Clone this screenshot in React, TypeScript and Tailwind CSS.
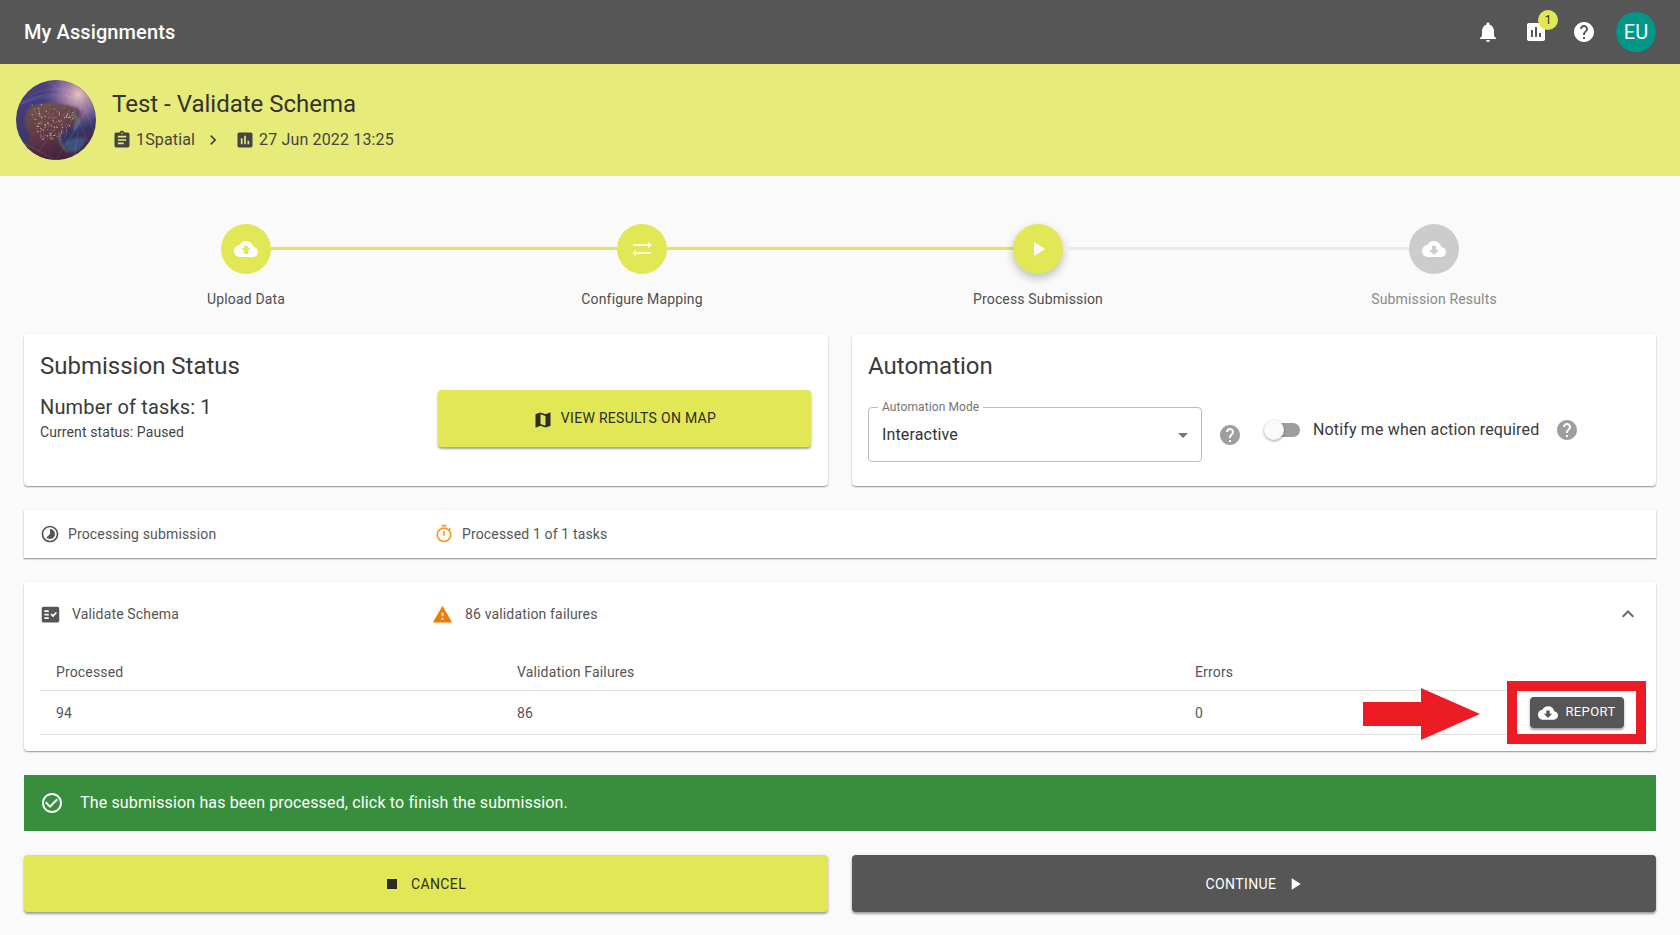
import type { ReactNode } from "react"
import {
  MdAssessment,
  MdAssignment,
  MdArrowDropDown,
  MdCheckCircleOutline,
  MdChevronRight,
  MdCloudDownload,
  MdCloudUpload,
  MdExpandLess,
  MdFactCheck,
  MdHelp,
  MdMap,
  MdNotifications,
  MdOutlineTimer,
  MdPlayArrow,
  MdStop,
  MdTimelapse,
  MdWarning,
} from "react-icons/md"

const cardShadow = "shadow-[0_1px_2px_rgba(0,0,0,0.25),0_1px_1px_rgba(0,0,0,0.2)]"
const buttonShadow = "shadow-[0_2px_2px_rgba(0,0,0,0.3),0_1px_4px_rgba(0,0,0,0.12)]"

const hash = (n: number) => {
  const s = Math.sin(n * 12.9898) * 43758.5453
  return s - Math.floor(s)
}

// scattered city lights for the globe avatar
const lights = Array.from({ length: 220 }, (_, i) => {
  const t = hash(i + 1)
  const y = 24 + hash(i + 200) * 36
  const left = 13 + (y - 24) * 0.3
  const right = 64 - (y - 24) * 0.45
  return {
    x: left + t * (right - left),
    y,
    r: hash(i + 500) > 0.8 ? 0.7 : 0.4,
    c: i % 3 === 0 ? "#f6e39a" : i % 3 === 1 ? "#eeb9a0" : "#dcc680",
  }
})

const streaks = [
  "M56 -2L82 60",
  "M68 2L58 80",
  "M30 0L82 38",
  "M80 16L40 80",
  "M44 0L76 70",
  "M2 60L40 80",
  "M70 8L22 72",
  "M14 16C30 6 54 6 76 20",
  "M6 24C26 10 56 10 80 30",
]

function Globe() {
  return (
    <svg viewBox="0 0 80 80" className="h-20 w-20 shrink-0">
      <defs>
        <linearGradient id="sea" x1="0.1" y1="0.1" x2="0.6" y2="1">
          <stop offset="0%" stopColor="#4b3f85" />
          <stop offset="40%" stopColor="#3f3a70" />
          <stop offset="75%" stopColor="#33386a" />
          <stop offset="100%" stopColor="#4a2348" />
        </linearGradient>
        <radialGradient id="glow" cx="78%" cy="18%" r="45%">
          <stop offset="0%" stopColor="#f3c9c0" stopOpacity="0.95" />
          <stop offset="55%" stopColor="#b98cb8" stopOpacity="0.55" />
          <stop offset="100%" stopColor="#7a5fa0" stopOpacity="0" />
        </radialGradient>
        <linearGradient id="land" x1="0.2" y1="0" x2="0.5" y2="1">
          <stop offset="0%" stopColor="#735550" />
          <stop offset="50%" stopColor="#613a49" />
          <stop offset="100%" stopColor="#431f3c" />
        </linearGradient>
        <clipPath id="round">
          <circle cx="40" cy="40" r="40" />
        </clipPath>
        <filter id="soft">
          <feGaussianBlur stdDeviation="0.8" />
        </filter>
      </defs>
      <circle cx="40" cy="40" r="40" fill="url(#sea)" />
      <g clipPath="url(#round)">
        <path d="M-4 28C16 16 40 14 62 19" fill="none" stroke="#5f6cae" strokeWidth="1.6" opacity="0.6" filter="url(#soft)" />
        <circle cx="40" cy="40" r="40" fill="url(#glow)" />
        <g filter="url(#soft)">
          <path
            d="M12 30C20 23 34 21 46 24C50 26 58 24 64 31C67 35 62 40 59 45C55 50 51 47 47 52C43 58 46 66 54 72C50 78 44 82 38 82L8 82C6 70 14 62 14 54C8 48 8 38 12 30Z"
            fill="url(#land)"
          />
          <path d="M49 62C54 58 64 57 70 58C68 68 60 74 55 72C51 70 48 66 49 62Z" fill="#3b5c88" opacity="0.8" />
          <path d="M56 33C62 38 62 44 58 50" fill="none" stroke="#63b0b4" strokeWidth="1.6" opacity="0.6" />
          <path d="M45 52C41 58 45 66 52 72" fill="none" stroke="#5aa6a8" strokeWidth="1.2" opacity="0.6" />
        </g>
        {lights.map((l, i) => (
          <circle key={i} cx={l.x} cy={l.y} r={l.r} fill={l.c} opacity="0.75" />
        ))}
        {streaks.map((d, i) => (
          <path key={i} d={d} stroke="#e6d3e2" strokeWidth="0.25" opacity="0.5" fill="none" />
        ))}
      </g>
    </svg>
  )
}

function SwapIcon() {
  return (
    <svg viewBox="0 0 24 24" className="h-6 w-6" fill="currentColor">
      <path d="M3 7.2h15V5l3.5 3-3.5 3V8.8H3z" />
      <path d="M21 15.2H6V13l-3.5 3L6 19v-2.2h15z" />
    </svg>
  )
}

function StepCircle({ children, active, muted }: { children: ReactNode; active?: boolean; muted?: boolean }) {
  return (
    <div
      className={`flex h-[50px] w-[50px] shrink-0 items-center justify-center rounded-full text-white ${
        muted ? "bg-[#cccccc]" : "bg-[#e2e756]"
      } ${active ? "shadow-[0_4px_10px_rgba(0,0,0,0.25)]" : ""}`}
    >
      {children}
    </div>
  )
}

function HeaderIcon({ children }: { children: ReactNode }) {
  return <div className="relative flex h-12 w-12 items-center justify-center text-white">{children}</div>
}

export default function App() {
  return (
    <div className="min-h-screen bg-[#fafafa] pb-[23px] [font-family:Roboto,sans-serif] text-[#333333]">
      <header className="flex h-16 items-center justify-between bg-[#565656] pl-6 pr-6 text-white">
        <h1 className="text-xl font-medium tracking-[0.1px]">My Assignments</h1>
        <div className="flex items-center">
          <HeaderIcon>
            <MdNotifications size={24} />
          </HeaderIcon>
          <HeaderIcon>
            <MdAssessment size={24} />
            <span className="absolute left-[26px] top-[2px] flex h-5 w-5 items-center justify-center rounded-full bg-[#e2e756] text-xs text-[#333333]">
              1
            </span>
          </HeaderIcon>
          <HeaderIcon>
            <MdHelp size={24} />
          </HeaderIcon>
          <div className="ml-2 flex h-10 w-10 items-center justify-center rounded-full bg-[#009688] text-xl">EU</div>
        </div>
      </header>

      <section className="flex h-28 items-center bg-[#e7eb7a] pl-4">
        <Globe />
        <div className="ml-4">
          <h2 className="-mt-[1px] text-2xl leading-8 text-[#333333]">Test - Validate Schema</h2>
          <div className="mt-[8px] flex items-center text-base leading-6 tracking-[0.15px] text-[#444444]">
            <MdAssignment size={20} />
            <span className="ml-[4px]">1Spatial</span>
            <MdChevronRight size={20} className="ml-[8px]" />
            <MdAssessment size={20} className="ml-[12px]" />
            <span className="ml-[4px]">27 Jun 2022 13:25</span>
          </div>
        </div>
      </section>

      <main className="px-6 pt-12">
        <div className="flex items-center px-[197px]">
          <StepCircle>
            <MdCloudUpload size={24} />
          </StepCircle>
          <div className="mb-[2px] h-[3px] flex-1 bg-[#e2e756]" />
          <StepCircle>
            <SwapIcon />
          </StepCircle>
          <div className="mb-[2px] h-[3px] flex-1 bg-[#e2e756]" />
          <StepCircle active>
            <MdPlayArrow size={24} />
          </StepCircle>
          <div className="mb-[2px] h-[3px] flex-1 bg-[#eaeaf0]" />
          <StepCircle muted>
            <MdCloudDownload size={24} />
          </StepCircle>
        </div>
        <div className="mt-[15px] grid grid-cols-4 px-6 text-center text-sm leading-5 tracking-[0.15px] text-[#4f4f4f]">
          <span>Upload Data</span>
          <span>Configure Mapping</span>
          <span>Process Submission</span>
          <span className="text-[#8a8a8a]">Submission Results</span>
        </div>

        <div className="mt-[25px] grid grid-cols-2 gap-6">
          <div className={`flex h-[152px] rounded bg-white ${cardShadow}`}>
            <div className="flex-1 pl-4 pt-[16px]">
              <h3 className="text-2xl leading-8 text-[#3a3a3a]">Submission Status</h3>
              <p className="mt-[11px] text-xl leading-7 tracking-[0.15px] text-[#3a3a3a]">Number of tasks: 1</p>
              <p className="mt-[1px] text-sm leading-5 tracking-[0.1px] text-[#444444]">Current status: Paused</p>
            </div>
            <button
              className={`mr-[17px] mt-[56px] flex h-[57px] w-[373px] items-center justify-center rounded bg-[#e2e756] text-sm tracking-[0.3px] text-[#2e2e20] ${buttonShadow}`}
            >
              <MdMap size={20} className="mr-[8px] mt-[2px]" />
              <span className="-mt-[1px]">VIEW RESULTS ON MAP</span>
            </button>
          </div>

          <div className={`h-[152px] rounded bg-white px-4 pt-[16px] ${cardShadow}`}>
            <h3 className="text-2xl leading-8 text-[#3a3a3a]">Automation</h3>
            <div className="mt-[25px] flex items-center">
              <div className="relative flex h-[55px] w-[334px] items-center justify-between rounded border border-[#bdbdbd] pl-[13px] pr-[6px]">
                <span className="absolute left-[9px] top-[-9px] bg-white px-1 text-xs leading-4 tracking-[0.1px] text-[#757575]">
                  Automation Mode
                </span>
                <span className="text-base tracking-[0.15px] text-[#333333]">Interactive</span>
                <MdArrowDropDown size={24} className="text-[#757575]" />
              </div>
              <MdHelp size={24} className="ml-[16px] text-[#9e9e9e]" />
              <div className="mb-[9px] ml-[22px] flex items-center">
                <div className="relative ml-[2px] h-[14px] w-[34px] rounded-full bg-[#9e9e9e]">
                  <span className="absolute left-[-2px] top-[-3px] h-5 w-5 rounded-full bg-[#fafafa] shadow-[0_1px_3px_rgba(0,0,0,0.4)]" />
                </div>
                <span className="ml-[13px] text-base tracking-[0.15px] text-[#3a3a3a]">Notify me when action required</span>
                <MdHelp size={24} className="ml-[16px] text-[#9e9e9e]" />
              </div>
            </div>
          </div>
        </div>

        <div className={`mt-6 flex h-12 items-center bg-white text-sm tracking-[0.15px] text-[#555555] ${cardShadow}`}>
          <div className="flex w-[410px] items-center pl-[16px]">
            <MdTimelapse size={20} className="text-[#555555]" />
            <span className="ml-[8px]">Processing submission</span>
          </div>
          <MdOutlineTimer size={20} className="text-[#fb9a1a]" />
          <span className="ml-[8px]">Processed 1 of 1 tasks</span>
        </div>

        <div className={`mt-6 h-[169px] rounded bg-white text-sm tracking-[0.15px] text-[#555555] ${cardShadow}`}>
          <div className="flex h-[64px] items-center pl-[16px] pr-4">
            <MdFactCheck size={21} className="text-[#565656]" />
            <span className="ml-[11px] w-[360px]">Validate Schema</span>
            <MdWarning size={21} className="text-[#f57c00]" />
            <span className="ml-[12px]">86 validation failures</span>
            <MdExpandLess size={24} className="ml-auto text-[#666666]" />
          </div>
          <div className="mx-4">
            <div className="grid h-[45px] grid-cols-[461px_678px_1fr] items-center border-b border-[#e0e0e0] pl-4 pt-[7px]">
              <span>Processed</span>
              <span>Validation Failures</span>
              <span>Errors</span>
            </div>
            <div className="grid h-[44px] grid-cols-[461px_678px_1fr_auto] items-center border-b border-[#e0e0e0] pl-4 pr-4">
              <span>94</span>
              <span>86</span>
              <span>0</span>
              <button
                className={`relative flex h-[31px] w-[94px] items-center justify-center rounded bg-[#565656] text-[13px] tracking-[0.4px] text-white ${buttonShadow}`}
              >
                <MdCloudDownload size={20} className="mr-[7px]" />
                REPORT
                <span className="pointer-events-none absolute -bottom-[16px] -left-[23px] -right-[22px] -top-[16px] border-[10px] border-[#ed1c24]" />
                <svg viewBox="0 0 117 52" className="absolute left-[-167px] top-[-9px] h-[52px] w-[117px]">
                  <path d="M0 14H58V0L117 26L58 52V38H0Z" fill="#ed1c24" />
                </svg>
              </button>
            </div>
          </div>
        </div>

        <div className="mt-6 flex h-14 items-center bg-[#388e3c] pl-[16px] text-base tracking-[0.15px] text-white">
          <MdCheckCircleOutline size={24} />
          <span className="ml-[16px]">The submission has been processed, click to finish the submission.</span>
        </div>

        <div className="mt-6 grid grid-cols-2 gap-6">
          <button
            className={`flex h-[57px] items-center justify-center rounded bg-[#e2e756] pr-[4px] text-sm tracking-[0.4px] text-[#2e2e20] ${buttonShadow}`}
          >
            <MdStop size={20} className="mr-[9px]" />
            CANCEL
          </button>
          <button
            className={`flex h-[57px] items-center justify-center rounded bg-[#565656] pl-[3px] text-sm tracking-[0.4px] text-white ${buttonShadow}`}
          >
            CONTINUE
            <MdPlayArrow size={20} className="ml-[9px]" />
          </button>
        </div>
      </main>
    </div>
  )
}
